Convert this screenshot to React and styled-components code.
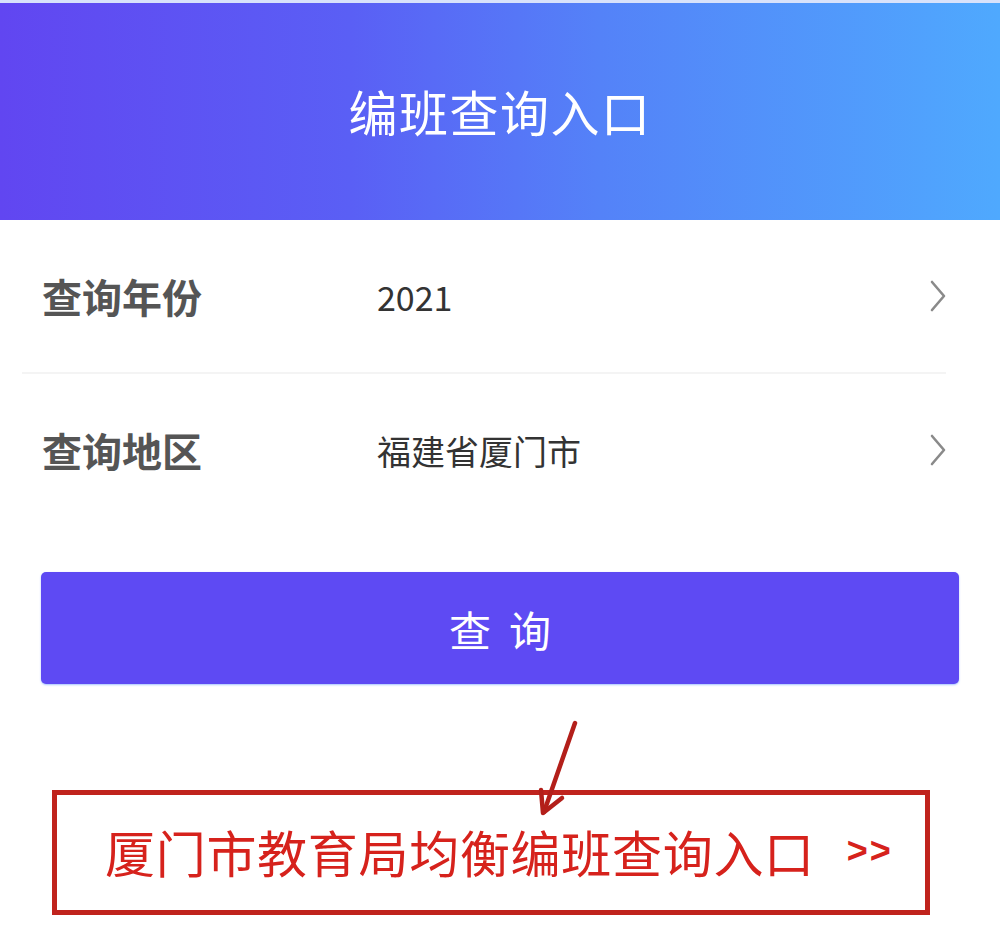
import styled, { createGlobalStyle } from 'styled-components';

const Global = createGlobalStyle`
body{margin:0;background:#fff;font-family:"Noto Sans CJK SC","Noto Sans",sans-serif;}
`

function Chevron() {
  return (
    <svg width="18" height="34" viewBox="0 0 18 34">
      <path d="M4 3 L16 17 L4 31" fill="none" stroke="#8a8a8a" strokeWidth="2.6" strokeLinecap="round" strokeLinejoin="round"/>
    </svg>
  )
}

function Arrow() {
  return (
    <svg width="60" height="100" viewBox="0 0 60 100">
      <path d="M45 3 L14 92" fill="none" stroke="#b31f1a" strokeWidth="4.5" strokeLinecap="round"/>
      <path d="M11 70 L13 93 L32 78" fill="none" stroke="#b31f1a" strokeWidth="4.5" strokeLinecap="round" strokeLinejoin="round"/>
    </svg>
  )
}

function App() {
  return (
    <Page>
      <Global/>
      <Header>
        <Title>编班查询入口</Title>
      </Header>
      <Form>
        <Row h={152}>
          <Label>查询年份</Label>
          <Value>2021</Value>
          <Chevron/>
        </Row>
        <Divider/>
        <Row h={152}>
          <Label>查询地区</Label>
          <Value>福建省厦门市</Value>
          <Chevron/>
        </Row>
      </Form>
      <Button>查询</Button>
      <Annotation>
        <ArrowWrap><Arrow/></ArrowWrap>
        <RedBox>
          <RedText>厦门市教育局均衡编班查询入口</RedText>
          <More>&gt;&gt;</More>
        </RedBox>
      </Annotation>
    </Page>
  )
}

const Page = styled.div`
width:1000px;
height:952px;
background:#fff;
overflow:hidden;
`
const Header = styled.div`
height:220px;
display:flex;
align-items:center;
justify-content:center;
background:linear-gradient(90deg,#6146f1 0%,#5a5ff5 35%,#5482f8 60%,#4fa9fe 100%);
border-top:3px solid #d8e2fb;
box-sizing:border-box;
`
const Title = styled.div`
color:#fff;
font-size:49px;
letter-spacing:1.5px;
font-weight:400;
margin-top:-2px;
`
const Form = styled.div`
padding:0 54px 0 42px;
`
const Row = styled.div`
height:${p => p.h}px;
display:flex;
align-items:center;
`
const Label = styled.div`
width:335px;
font-size:40px;
font-weight:700;
color:#555;
`
const Value = styled.div`
flex:1;
font-size:34px;
color:#333;
`
const Divider = styled.div`
height:2px;
background:#f4f4f4;
margin-left:-20px;
`
const Button = styled.div`
margin:46px 41px 0;
height:112px;
border-radius:5px;
background:#5e4af3;
box-shadow:0 1px 2px rgba(80,140,255,.5);
color:#fff;
font-size:42px;
letter-spacing:18px;
padding-left:18px;
display:flex;
align-items:center;
justify-content:center;
`
const Annotation = styled.div`
position:relative;
padding:106px 0 0 52px;
`
const ArrowWrap = styled.div`
position:absolute;
left:530px;
top:36px;
`
const RedBox = styled.div`
width:878px;
height:125px;
box-sizing:border-box;
border:5px solid #c0231d;
display:flex;
align-items:center;
padding-left:48px;
padding-bottom:4px;
`
const RedText = styled.span`
color:#d6221c;
font-size:50px;
letter-spacing:0.7px;
`
const More = styled.span`
color:#d6221c;
font-size:36px;
font-family:"Liberation Sans",sans-serif;
font-weight:700;
margin-left:32px;
letter-spacing:2px;
`

export default App;
